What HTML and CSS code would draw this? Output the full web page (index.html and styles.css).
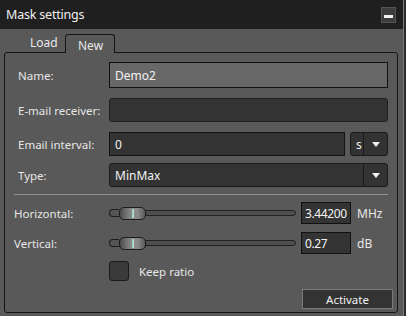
FILE: index.html
```html
<!DOCTYPE html>
<html>
<head>
<meta charset="utf-8">
<link rel="stylesheet" href="styles.css">
</head>
<body>
<div class="window">
  <div class="titlebar">
    <span class="title">Mask settings</span>
    <div class="minbtn"><span class="minbar"></span></div>
  </div>
  <div class="content">
    <div class="tabs">
      <div class="tab">Load</div>
      <div class="tab active">New</div>
    </div>
    <div class="panel">
      <div class="row r-name">
        <label class="lbl">Name:</label>
        <div class="field disabled">Demo2</div>
      </div>
      <div class="row r-mail">
        <label class="lbl">E-mail receiver:</label>
        <div class="field round"></div>
      </div>
      <div class="row r-interval">
        <label class="lbl">Email interval:</label>
        <div class="field grow">0</div>
        <div class="combo small"><span class="combo-text">s</span><span class="combo-arrow"><span class="tri"></span></span></div>
      </div>
      <div class="row r-type">
        <label class="lbl">Type:</label>
        <div class="combo wide"><span class="combo-text">MinMax</span><span class="combo-arrow"><span class="tri"></span></span></div>
      </div>
      <div class="sep"></div>
      <div class="row r-h">
        <label class="lbl lbl-s">Horizontal:</label>
        <div class="slider"><div class="track"></div><div class="thumb"><span class="cap"></span><span class="body"><span class="mark"></span></span></div></div>
        <div class="num">3.44200</div>
        <span class="unit">MHz</span>
      </div>
      <div class="row r-v">
        <label class="lbl lbl-s">Vertical:</label>
        <div class="slider"><div class="track"></div><div class="thumb"><span class="cap"></span><span class="body"><span class="mark"></span></span></div></div>
        <div class="num">0.27</div>
        <span class="unit">dB</span>
      </div>
      <div class="row r-check">
        <span class="check"></span>
        <span class="check-label">Keep ratio</span>
      </div>
      <div class="row r-btn">
        <button class="btn">Activate</button>
      </div>
    </div>
  </div>
</div>
</body>
</html>
```

FILE: styles.css
```css
* { box-sizing: border-box; }
html, body { margin: 0; padding: 0; }
body {
  width: 406px;
  height: 316px;
  background: #2b2b2b;
  font-family: "Noto Sans", "Open Sans", sans-serif;
  font-size: 11.5px;
  color: #e8e8e8;
  overflow: hidden;
}
.window {
  width: 404px;
  height: 316px;
  background: #595959;
  border-right: 1px solid #7a7a7a;
  display: flex;
  flex-direction: column;
}
.titlebar {
  height: 29px;
  background: #1f1f1f;
  display: flex;
  align-items: center;
  justify-content: space-between;
  padding: 0 7px 0 6px;
}
.title { font-size: 12.5px; color: #f0f0f0; letter-spacing: -0.2px; }
.minbtn {
  width: 15px;
  height: 16px;
  background: #3d3d3d;
  border: 1px solid #555;
  display: flex;
  align-items: flex-end;
  justify-content: center;
  padding-bottom: 4px;
}
.minbar { width: 9px; height: 3px; background: #f2f2f2; }
.content { flex: 1; padding: 4px 5px 3px 4px; display: flex; flex-direction: column; }
.tabs { display: flex; height: 19px; padding-left: 18px; align-items: flex-end; }
.tab {
  width: 40px;
  height: 19px;
  padding: 0 0 0 8px;
  display: flex;
  align-items: center;
  font-size: 12px;
  color: #e8e8e8;
}
.tab.active {
  width: 50px;
  margin-left: 3px;
  padding: 3px 0 0 12px;
  border: 1px solid #151515;
  border-bottom: none;
  border-radius: 3px 3px 0 0;
  background: #595959;
  position: relative;
  top: 1px;
  z-index: 1;
}
.panel {
  flex: 1;
  border: 1px solid #151515;
  border-radius: 3px;
  padding: 9px 9px 0 13px;
  display: flex;
  flex-direction: column;
}
.row { display: flex; align-items: center; }
.lbl { width: 91px; flex: none; color: #e6e6e6; }
.field {
  flex: 1;
  height: 24px;
  background: #333;
  border: 1px solid #111;
  padding: 0 5px;
  display: flex;
  align-items: center;
  color: #f2f2f2;
  font-size: 12px;
}
.field.disabled { background: #676767; height: 26px; }
.field.round { border-radius: 3px; border-color: #1e1e1e; }
.r-mail { margin-top: 10px; }
.r-interval { margin-top: 10px; }
.r-type { margin-top: 7px; }
.combo {
  height: 24px;
  background: #333;
  border: 1px solid #1a1a1a;
  border-radius: 3px;
  display: flex;
  align-items: stretch;
}
.combo.small { width: 38px; margin-left: 5px; flex: none; }
.combo.wide { flex: 1; }
.combo-text { flex: 1; display: flex; align-items: center; padding-left: 5px; color: #f2f2f2; font-size: 12px; }
.combo-arrow {
  width: 24px;
  border-left: 1px solid #1a1a1a;
  display: flex;
  align-items: center;
  justify-content: center;
}
.tri {
  width: 0; height: 0;
  border-left: 4px solid transparent;
  border-right: 4px solid transparent;
  border-top: 5px solid #f2f2f2;
}
.sep { height: 1px; background: #8c9298; margin: 7px 0 0 -4px; }
.r-h { margin-top: 7px; }
.r-v { margin-top: 8px; }
.lbl-s { margin-left: -4px; width: 95px; }
.slider { position: relative; width: 187px; height: 22px; flex: none; margin-left: 0; }
.track {
  position: absolute;
  left: 0; right: 0; top: 8px;
  height: 6px;
  background: #4e4e4e;
  border: 1px solid #222;
  border-radius: 3px;
}
.thumb { position: absolute; left: 0; top: 4px; height: 14px; display: flex; align-items: center; }
.cap {
  width: 10px; height: 8px;
  background: #555;
  border: 1px solid #1c1c1c;
  border-radius: 4px 0 0 4px;
  border-right: none;
}
.body {
  position: relative;
  width: 27px; height: 13px;
  border: 1px solid #1c1c1c;
  border-radius: 5px;
  background: linear-gradient(to right, #4a4a4a 0%, #6a6a6a 20%, #8a8a8a 45%, #8a8a8a 70%, #5a5a5a 100%);
}
.mark { position: absolute; left: 12px; top: 1px; width: 2px; height: 9px; background: linear-gradient(to right, #6fd0b8, #e0e0e0); }
.num {
  width: 50px; height: 22px;
  margin-left: 5px;
  background: #333;
  border: 1px solid #111;
  display: flex; align-items: center;
  padding-left: 3px;
  color: #f2f2f2;
  font-size: 12px;
  letter-spacing: -0.4px;
  flex: none;
}
.unit { margin-left: 6px; font-size: 12px; color: #e8e8e8; }
.r-check { margin-top: 7px; padding-left: 91px; }
.check {
  width: 20px; height: 20px;
  background: #3a3a3a;
  border: 1px solid #1a1a1a;
  border-radius: 3px;
  flex: none;
}
.check-label { margin-left: 10px; font-size: 11.5px; }
.r-btn { justify-content: flex-end; margin-top: 8px; margin-right: -5px; }
.btn {
  width: 91px; height: 20px;
  background: #333;
  border: 1px solid #7a7a7a;
  color: #f2f2f2;
  font-family: inherit;
  font-size: 11.5px;
  padding: 0;
}
```
